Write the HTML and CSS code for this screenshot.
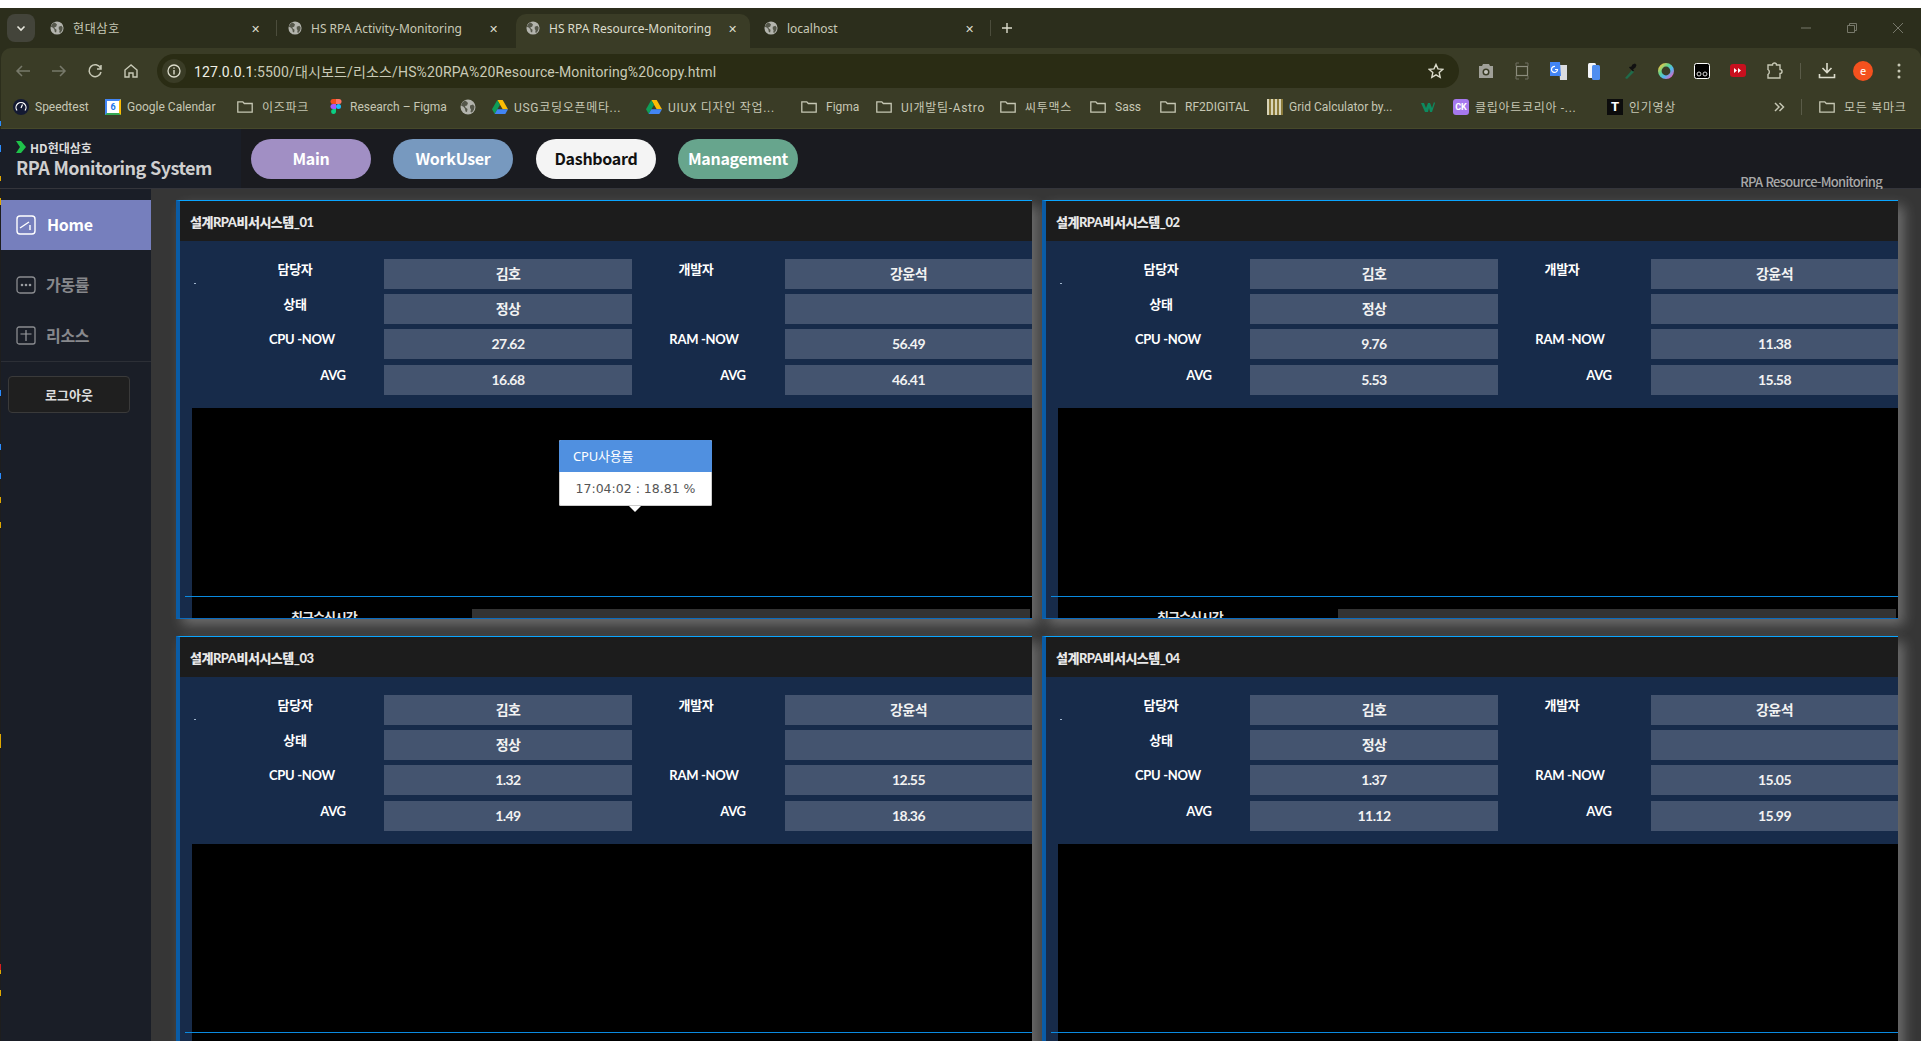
FILE: index.html
```html
<!DOCTYPE html>
<html lang="ko">
<head>
  <meta charset="UTF-8">
  <meta name="viewport" content="width=device-width, initial-scale=1.0">
  <title>HS RPA Resource-Monitoring</title>
  <link rel="stylesheet" href="styles.css">
</head>
<body>
  <!-- Shared browser icons -->
  <svg class="icon-defs" xmlns="http://www.w3.org/2000/svg">
    <symbol id="i-globe" viewBox="0 0 16 16">
      <circle cx="8" cy="8" r="7.5" fill="#b3b4ad"/>
      <path d="M5 1.6C3 2.6 1.5 4.500 1 6.500l2.500 1.300 1.500 2 .5 2.700 1.500.5.500-3-2-1.500-.5-1.500 2-.500 1-2.500L6.500 2.500zM10 6.500l3-1 1.500 2-.5 3-2 3-1.500-.5.5-2.500-1-1.500z" fill="#55574a"/>
    </symbol>
    <symbol id="i-folder" viewBox="0 0 16 16">
      <path d="M.8 2.800h5l1.500 1.700h7.900v8.700H.8z" fill="none" stroke="#c6c7b4" stroke-width="1.300"/>
    </symbol>
    <symbol id="i-drive" viewBox="0 0 16 14">
      <path d="M5.300 0h5.400L16 9.300h-5.300z" fill="#fbbc04"/>
      <path d="M5.300 0L0 9.300l2.700 4.700L8 4.700z" fill="#0f9d58"/>
      <path d="M5.400 9.300H16L13.300 14H2.700z" fill="#4285f4"/>
    </symbol>
  </svg>

  <!-- Coloured slivers of the window behind, along the left edge -->
  <div class="edge-marks"></div>

  <div class="tabstrip">
    <button class="tab-search">
      <svg width="12" height="12" viewBox="0 0 12 12"><path d="M2.500 4.500L6 8l3.500-3.500" fill="none" stroke="#e6e6dc" stroke-width="1.600"/></svg>
    </button>
    <div class="tab tab-sep">
      <svg class="tab-icon"><use href="#i-globe"/></svg>
      <span class="tab-label ko">현대삼호</span>
      <span class="tab-close">✕</span>
    </div>
    <div class="tab">
      <svg class="tab-icon"><use href="#i-globe"/></svg>
      <span class="tab-label">HS RPA Activity-Monitoring</span>
      <span class="tab-close">✕</span>
    </div>
    <div class="tab active">
      <svg class="tab-icon"><use href="#i-globe"/></svg>
      <span class="tab-label">HS RPA Resource-Monitoring</span>
      <span class="tab-close">✕</span>
    </div>
    <div class="tab tab-sep">
      <svg class="tab-icon"><use href="#i-globe"/></svg>
      <span class="tab-label">localhost</span>
      <span class="tab-close">✕</span>
    </div>
    <svg class="tab-new" width="12" height="12" viewBox="0 0 12 12"><path d="M6 1v10M1 6h10" stroke="#dcdccc" stroke-width="1.400"/></svg>
    <div class="window-btns">
      <svg width="46" height="12" viewBox="0 0 46 12"><path d="M18 6h10" stroke="#77786a"/></svg>
      <svg width="46" height="12" viewBox="0 0 46 12"><path d="M18.500 3.500h7v7h-7zM20.500 3.500v-2h7v7h-2" fill="none" stroke="#77786a"/></svg>
      <svg width="46" height="12" viewBox="0 0 46 12"><path d="M18 1l10 10M28 1L18 11" stroke="#77786a"/></svg>
    </div>
  </div>

  <div class="browser-panel">
    <div class="toolbar">
      <div class="nav-btns">
        <svg width="36" height="16" viewBox="0 0 36 16"><path d="M25 8H12M17 3l-5 5 5 5" fill="none" stroke="#77796a" stroke-width="1.500"/></svg>
        <svg width="36" height="16" viewBox="0 0 36 16"><path d="M11 8h13M19 3l5 5-5 5" fill="none" stroke="#77796a" stroke-width="1.500"/></svg>
        <svg width="36" height="16" viewBox="0 0 36 16"><path d="M23.500 5A6 6 0 1 0 24 9M24 2v4h-4" fill="none" stroke="#c8c9b6" stroke-width="1.500"/></svg>
        <svg width="36" height="16" viewBox="0 0 36 16"><path d="M18 2l-6 5v7h4v-4h4v4h4V7z" fill="none" stroke="#c8c9b6" stroke-width="1.400"/></svg>
      </div>
      <div class="omnibox">
        <span class="site-info">
          <svg width="14" height="14" viewBox="0 0 14 14"><circle cx="7" cy="7" r="6" fill="none" stroke="#dcdccc" stroke-width="1.300"/><path d="M7 6v4.500M7 3.500v1.300" stroke="#dcdccc" stroke-width="1.400"/></svg>
        </span>
        <span class="url"><span class="url-host">127.0.0.1</span>:5500/대시보드/리소스/HS%20RPA%20Resource-Monitoring%20copy.html</span>
        <svg class="star" width="16" height="16" viewBox="0 0 16 16"><path d="M8 1.500l2 4.400 4.700.5-3.500 3.200 1 4.700L8 11.900l-4.200 2.400 1-4.700L1.300 6.400 6 5.900z" fill="none" stroke="#dcdccc" stroke-width="1.400"/></svg>
      </div>
      <div class="actions">
        <svg width="36" height="18" viewBox="0 0 36 18"><path d="M11 4h3l1-2h6l1 2h3v12H11z" fill="#a0a098"/><circle cx="18" cy="10" r="3.500" fill="#3a3c26"/><circle cx="18" cy="10" r="2" fill="#c4c4bc"/></svg>
        <svg width="36" height="18" viewBox="0 0 36 18"><path d="M12 4V1h3M21 1h3v3M24 14v3h-3M15 17h-3v-3" fill="none" stroke="#6e6f60"/><rect x="12.500" y="4.500" width="11" height="9" fill="none" stroke="#8b8c7c" stroke-width="1.200"/></svg>
        <svg width="36" height="18" viewBox="0 0 36 18"><path d="M19 3h8v15h-7z" fill="#dadce0"/><path d="M10 0h10l1 14H10z" fill="#4285f4"/><path d="M15 4.500a3 3 0 1 0 2.500 3H15" fill="none" stroke="#fff" stroke-width="1.200"/></svg>
        <svg width="36" height="18" viewBox="0 0 36 18"><rect x="12" y="1" width="8" height="15" rx="1.500" fill="#f4f6fa"/><rect x="16" y="3" width="8" height="15" rx="1.500" fill="#4f8ef0"/></svg>
        <svg width="36" height="18" viewBox="0 0 36 18"><path d="M13 16l7-8 2 2-7 7z" fill="#1f6b4a"/><path d="M19 5l1.500-2.500 2.500-1 1.500 1.500-1 2.500L21 7.500l1 1-1 1-4-4 1-1z" fill="#111"/></svg>
        <svg width="36" height="18" viewBox="0 0 36 18"><circle cx="18" cy="9" r="6.200" fill="none" stroke="url(#ring)" stroke-width="3.600"/><defs><linearGradient id="ring" x1="0" y1="0" x2="1" y2="1"><stop offset="0" stop-color="#f5c542"/><stop offset=".35" stop-color="#5fd38d"/><stop offset=".65" stop-color="#4fb6f0"/><stop offset="1" stop-color="#e85fc0"/></linearGradient></defs></svg>
        <svg width="36" height="18" viewBox="0 0 36 18"><rect x="10.500" y="1.500" width="15" height="15" rx="2" fill="#000" stroke="#fff"/><circle cx="15" cy="12" r="2" fill="none" stroke="#ddd"/><circle cx="21" cy="12" r="2" fill="none" stroke="#ddd"/></svg>
        <svg width="36" height="18" viewBox="0 0 36 18"><rect x="10" y="2" width="16" height="13" rx="3" fill="#c8101e"/><path d="M14 6l3 2.500-3 2.500zM18 6l3 2.500-3 2.500z" fill="#fff"/></svg>
        <svg width="36" height="18" viewBox="0 0 36 18"><path d="M12 3h4.500a2 2 0 0 1 4 0H24v4.500a2 2 0 0 1 0 4V16H12v-3.500a3 3 0 0 0 0-5z" fill="none" stroke="#c6c7b4" stroke-width="1.400"/></svg>
        <span class="toolbar-sep"></span>
        <svg width="36" height="18" viewBox="0 0 36 18"><path d="M18 1v9M13.500 6l4.500 4.500L22.500 6M10.500 12v3.500h15V12" fill="none" stroke="#dcdccc" stroke-width="1.600"/></svg>
        <span class="avatar-wrap"><span class="avatar">e</span></span>
        <svg width="36" height="18" viewBox="0 0 36 18"><circle cx="18" cy="3" r="1.500" fill="#c8c9b6"/><circle cx="18" cy="9" r="1.500" fill="#c8c9b6"/><circle cx="18" cy="15" r="1.500" fill="#c8c9b6"/></svg>
      </div>
    </div>

    <div class="bookmarks">
      <span class="bm">
        <svg class="bm-icon" viewBox="0 0 16 16"><circle cx="8" cy="8" r="8" fill="#141a33"/><path d="M4 11.500A5 5 0 1 1 12 11.500M8 9l1.500-3.500" fill="none" stroke="#fff" stroke-width="1.200"/></svg>
        Speedtest
      </span>
      <span class="bm">
        <span class="gcal">6</span>
        Google Calendar
      </span>
      <span class="bm"><svg class="bm-icon bm-folder"><use href="#i-folder"/></svg><span class="ko">이즈파크</span></span>
      <span class="bm">
        <svg class="bm-icon" viewBox="0 0 16 16"><path d="M5 0h3v5H5a2.500 2.500 0 0 1 0-5z" fill="#f24e1e"/><path d="M8 0h3a2.500 2.500 0 0 1 0 5H8z" fill="#ff7262"/><path d="M5 5h3v5H5a2.500 2.500 0 0 1 0-5z" fill="#a259ff"/><circle cx="10.500" cy="7.500" r="2.500" fill="#1abcfe"/><path d="M5 10h3v3a2.500 2.500 0 1 1-3-3z" fill="#0acf83"/></svg>
        Research – Figma
      </span>
      <span class="bm"><svg class="bm-icon"><use href="#i-globe"/></svg></span>
      <span class="bm"><svg class="bm-icon"><use href="#i-drive"/></svg><span class="ko">USG코딩오픈메타...</span></span>
      <span class="bm"><svg class="bm-icon"><use href="#i-drive"/></svg><span class="ko">UIUX 디자인 작업...</span></span>
      <span class="bm"><svg class="bm-icon bm-folder"><use href="#i-folder"/></svg>Figma</span>
      <span class="bm"><svg class="bm-icon bm-folder"><use href="#i-folder"/></svg><span class="ko">UI개발팀-Astro</span></span>
      <span class="bm"><svg class="bm-icon bm-folder"><use href="#i-folder"/></svg><span class="ko">씨투맥스</span></span>
      <span class="bm"><svg class="bm-icon bm-folder"><use href="#i-folder"/></svg>Sass</span>
      <span class="bm"><svg class="bm-icon bm-folder"><use href="#i-folder"/></svg>RF2DIGITAL</span>
      <span class="bm"><span class="grid-calc"></span>Grid Calculator by...</span>
      <span class="bm">
        <svg class="bm-icon" viewBox="0 0 16 16"><path d="M0 4h3l2 5 2-5h2l2 5 2-6 1 1-3 9H9L8 9l-1 4H4z" fill="#0d8a5f"/></svg>
      </span>
      <span class="bm"><span class="ck">CK</span><span class="ko">클립아트코리아 -...</span></span>
      <span class="bm"><span class="tt">T</span><span class="ko">인기영상</span></span>
      <span class="bm-more">
        <svg width="12" height="12" viewBox="0 0 12 12"><path d="M2 2l4 4-4 4M6.500 2l4 4-4 4" fill="none" stroke="#c6c7b4" stroke-width="1.500"/></svg>
      </span>
      <span class="bm-sep"></span>
      <span class="bm bm-all"><svg class="bm-icon bm-folder"><use href="#i-folder"/></svg><span class="ko">모든 북마크</span></span>
    </div>
  </div>

  <header class="app-header">
    <div class="logo">
      <div class="logo-top">
        <svg width="10" height="12" viewBox="0 0 10 12"><path d="M0 0h5l5 6-5 6H0l4-6z" fill="#1fc24a"/></svg>
        HD현대삼호
      </div>
      <div class="logo-title">RPA Monitoring System</div>
    </div>
    <nav class="top-nav">
      <a class="pill pill-main">Main</a>
      <a class="pill pill-work">WorkUser</a>
      <a class="pill pill-dash">Dashboard</a>
      <a class="pill pill-mgmt">Management</a>
    </nav>
    <div class="page-name">RPA Resource-Monitoring</div>
  </header>

  <div class="app-body">
    <aside class="sidebar">
      <a class="side-home">
        <svg width="20" height="20" viewBox="0 0 20 20"><rect x="1" y="1" width="18" height="18" rx="3" fill="none" stroke="#fff" stroke-width="1.400"/><path d="M4 13l9-6M14 10v5" fill="none" stroke="#fff" stroke-width="1.400"/></svg>
        <span class="side-text">Home</span>
      </a>
      <div class="side-list">
        <a class="side-item">
          <svg width="20" height="18" viewBox="0 0 20 18"><rect x="1" y="1" width="18" height="16" rx="3" fill="none" stroke="#8a8c90" stroke-width="1.300"/><circle cx="6" cy="9" r="1.300" fill="#9a9ca0"/><circle cx="10" cy="9" r="1.300" fill="#9a9ca0"/><circle cx="14" cy="9" r="1.300" fill="#9a9ca0"/></svg>
          <span class="side-text">가동률</span>
        </a>
        <a class="side-item">
          <svg width="20" height="19" viewBox="0 0 20 19"><rect x="1" y="1" width="18" height="17" rx="2" fill="none" stroke="#8a8c90" stroke-width="1.300"/><path d="M4.500 8h11M10 4v11" fill="none" stroke="#9a9ca0" stroke-width="1.200"/></svg>
          <span class="side-text">리소스</span>
        </a>
      </div>
      <button class="logout">로그아웃</button>
    </aside>

    <main class="board">
      <section class="panel">
        <div class="panel-head">설계RPA비서시스템_01</div>
        <div class="panel-body">
          <div class="info">
            <div class="lb">담당자</div><div class="val">김호</div><div class="lb2">개발자</div><div class="val">강윤석</div>
            <div class="lb">상태</div><div class="val">정상</div><div class="lb2"></div><div class="val"></div>
            <div class="lb lb-now">CPU -NOW</div><div class="val">27.62</div><div class="lb2 lb2-now">RAM -NOW</div><div class="val">56.49</div>
            <div class="lb lb-avg">AVG</div><div class="val">16.68</div><div class="lb2 lb2-avg">AVG</div><div class="val">46.41</div>
          </div>
          <div class="chart">
            <div class="tooltip">
              <div class="tooltip-head">CPU사용률</div>
              <div class="tooltip-body">17:04:02 : 18.81 %</div>
            </div>
          </div>
          <div class="recv"><span class="recv-label">최근수신시간</span><span class="recv-bar"></span></div>
        </div>
      </section>

      <section class="panel">
        <div class="panel-head">설계RPA비서시스템_02</div>
        <div class="panel-body">
          <div class="info">
            <div class="lb">담당자</div><div class="val">김호</div><div class="lb2">개발자</div><div class="val">강윤석</div>
            <div class="lb">상태</div><div class="val">정상</div><div class="lb2"></div><div class="val"></div>
            <div class="lb lb-now">CPU -NOW</div><div class="val">9.76</div><div class="lb2 lb2-now">RAM -NOW</div><div class="val">11.38</div>
            <div class="lb lb-avg">AVG</div><div class="val">5.53</div><div class="lb2 lb2-avg">AVG</div><div class="val">15.58</div>
          </div>
          <div class="chart"></div>
          <div class="recv"><span class="recv-label">최근수신시간</span><span class="recv-bar"></span></div>
        </div>
      </section>

      <section class="panel">
        <div class="panel-head">설계RPA비서시스템_03</div>
        <div class="panel-body">
          <div class="info">
            <div class="lb">담당자</div><div class="val">김호</div><div class="lb2">개발자</div><div class="val">강윤석</div>
            <div class="lb">상태</div><div class="val">정상</div><div class="lb2"></div><div class="val"></div>
            <div class="lb lb-now">CPU -NOW</div><div class="val">1.32</div><div class="lb2 lb2-now">RAM -NOW</div><div class="val">12.55</div>
            <div class="lb lb-avg">AVG</div><div class="val">1.49</div><div class="lb2 lb2-avg">AVG</div><div class="val">18.36</div>
          </div>
          <div class="chart"></div>
          <div class="recv"><span class="recv-bar"></span></div>
        </div>
      </section>

      <section class="panel">
        <div class="panel-head">설계RPA비서시스템_04</div>
        <div class="panel-body">
          <div class="info">
            <div class="lb">담당자</div><div class="val">김호</div><div class="lb2">개발자</div><div class="val">강윤석</div>
            <div class="lb">상태</div><div class="val">정상</div><div class="lb2"></div><div class="val"></div>
            <div class="lb lb-now">CPU -NOW</div><div class="val">1.37</div><div class="lb2 lb2-now">RAM -NOW</div><div class="val">15.05</div>
            <div class="lb lb-avg">AVG</div><div class="val">11.12</div><div class="lb2 lb2-avg">AVG</div><div class="val">15.99</div>
          </div>
          <div class="chart"></div>
          <div class="recv"><span class="recv-bar"></span></div>
        </div>
      </section>
    </main>
  </div>
</body>
</html>
```

FILE: styles.css
```css
* {
  box-sizing: border-box;
}
html, body {
  height: 100%;
  margin: 0;
}
body {
  display: flex;
  flex-direction: column;
  padding-top: 8px;
  overflow: hidden;
  background: linear-gradient(#fff 8px, #2c2e1c 8px);
  font-family: "Noto Sans", "Noto Sans CJK KR", sans-serif;
}
.icon-defs {
  display: none;
}
svg {
  display: block;
  flex: none;
}
.ko {
  letter-spacing: 0.7px;
}
.edge-marks {
  position: absolute;
  left: 0;
  top: 0;
  z-index: 5;
  width: 1px;
  height: 1041px;
  background-image:
    linear-gradient(#2a8cff, #2a8cff),
    linear-gradient(#2a8cff, #2a8cff),
    linear-gradient(#e0a800, #e0a800),
    linear-gradient(#e0a800, #e0a800),
    linear-gradient(#2a8cff, #2a8cff),
    linear-gradient(#2a8cff, #2a8cff),
    linear-gradient(#2a8cff, #2a8cff),
    linear-gradient(#e0a800, #e0a800),
    linear-gradient(#e0a800, #e0a800),
    linear-gradient(#e0a800, #e0a800),
    linear-gradient(#d81e1e, #d81e1e),
    linear-gradient(#e0a800, #e0a800),
    linear-gradient(#e0a800, #e0a800);
  background-repeat: no-repeat;
  background-size: 1px 5px, 1px 7px, 1px 5px, 1px 7px, 1px 6px, 1px 6px, 1px 6px, 1px 6px, 1px 6px, 1px 14px, 1px 6px, 1px 4px, 1px 6px;
  background-position: 0 121px, 0 145px, 0 176px, 0 198px, 0 390px, 0 444px, 0 473px, 0 497px, 0 522px, 0 734px, 0 964px, 0 970px, 0 990px;
}

/* Browser tabs */
.tabstrip {
  display: flex;
  align-items: stretch;
  height: 40px;
  padding-top: 6px;
  background-color: #2c2e1c;
  font-size: 12px;
  color: #c8c9b6;
}
.tab-search {
  width: 28px;
  height: 28px;
  margin: 0 5px 0 7px;
  padding: 0;
  display: flex;
  align-items: center;
  justify-content: center;
  border: none;
  border-radius: 8px;
  background-color: #43443a;
}
.tab {
  position: relative;
  display: flex;
  align-items: center;
  width: 238px;
  padding: 0 0 6px 10px;
}
.tab.active {
  width: 234px;
  padding-left: 10px;
  margin-right: 4px;
  border-radius: 10px 10px 0 0;
  background-color: #3a3c26;
  color: #dcdccc;
}
.tab-sep:after {
  content: "";
  position: absolute;
  right: 1px;
  top: 6px;
  width: 1px;
  height: 16px;
  background-color: #4c4d3c;
}
.tab-icon {
  width: 14px;
  height: 14px;
  margin-right: 9px;
}
.tab-label {
  flex: 1;
  white-space: nowrap;
}
.tab-close {
  width: 12px;
  margin-right: 15px;
  font-size: 11px;
  color: #dcdccc;
}
.tab.active .tab-close {
  margin-right: 10px;
}
.tab-new {
  margin: 8px 0 0 9px;
}
.window-btns {
  display: flex;
  margin: 8px 0 0 auto;
}

/* Address bar */
.browser-panel {
  margin-left: 1px;
  border-radius: 10px 10px 0 0;
  background-color: #3a3c26;
}
.toolbar {
  display: flex;
  align-items: center;
  height: 40px;
  padding: 6px 4px 0 4px;
}
.nav-btns {
  display: flex;
  margin-right: 8px;
}
.omnibox {
  flex: 1;
  display: flex;
  align-items: center;
  height: 34px;
  padding: 0 15px 0 5px;
  border-radius: 17px;
  background-color: #2a2c14;
  font-family: "Roboto", "Noto Sans CJK KR", sans-serif;
  font-size: 14px;
  letter-spacing: 0.14px;
  color: #c9cab6;
}
.site-info {
  display: flex;
  align-items: center;
  justify-content: center;
  width: 24px;
  height: 24px;
  margin-right: 8px;
  border-radius: 50%;
  background-color: #3a3c26;
}
.url {
  flex: 1;
  white-space: nowrap;
}
.url-host {
  color: #f0f0e4;
}
.actions {
  display: flex;
  align-items: center;
  margin-left: 9px;
}
.toolbar-sep {
  width: 1px;
  height: 16px;
  margin: 0 8px;
  background-color: #5a5b48;
}
.avatar-wrap {
  display: flex;
  justify-content: center;
  width: 36px;
}
.avatar {
  width: 20px;
  height: 20px;
  border-radius: 50%;
  background-color: #f4511e;
  color: #fff;
  font-size: 11px;
  line-height: 19px;
  text-align: center;
}

/* Bookmarks bar */
.bookmarks {
  display: flex;
  align-items: center;
  height: 41px;
  padding: 0 14px 3px 12px;
  border-bottom: 1px solid #46482a;
  font-family: "Roboto", "Noto Sans CJK KR", sans-serif;
  font-size: 12px;
  color: #c6c7b4;
  white-space: nowrap;
}
.bm {
  flex: none;
  display: flex;
  align-items: center;
  gap: 6px;
}
.bm:nth-child(1) { width: 92px; }
.bm:nth-child(2) { width: 132px; }
.bm:nth-child(3) { width: 91px; }
.bm:nth-child(4) { width: 132px; }
.bm:nth-child(5) { width: 32px; }
.bm:nth-child(6) { width: 154px; }
.bm:nth-child(7) { width: 155px; }
.bm:nth-child(8) { width: 75px; }
.bm:nth-child(9) { width: 124px; }
.bm:nth-child(10) { width: 90px; }
.bm:nth-child(11) { width: 70px; }
.bm:nth-child(12) { width: 107px; }
.bm:nth-child(13) { width: 154px; }
.bm:nth-child(14) { width: 32px; }
.bm:nth-child(15) { width: 154px; }
.bm-icon {
  width: 16px;
  height: 16px;
}
.bm-folder {
  margin-right: 3px;
}
.gcal {
  width: 16px;
  height: 16px;
  border: 2px solid #4285f4;
  border-bottom-color: #34a853;
  border-right-color: #fbbc04;
  background-color: #fff;
  color: #1a73e8;
  font-size: 9px;
  font-weight: 700;
  line-height: 12px;
  text-align: center;
}
.grid-calc {
  width: 16px;
  height: 16px;
  background: repeating-linear-gradient(to right, #d8d4b8 0 2px, #8a7a3a 2px 4px);
}
.ck {
  width: 16px;
  height: 16px;
  border-radius: 3px;
  background-color: #a678ee;
  color: #fff;
  font-size: 9px;
  font-weight: 700;
  line-height: 16px;
  text-align: center;
}
.tt {
  width: 16px;
  height: 16px;
  background-color: #0c0c0c;
  color: #fff;
  font-size: 13px;
  font-weight: 800;
  line-height: 16px;
  text-align: center;
}
.bm-more {
  margin-left: auto;
  margin-right: 16px;
}
.bm-sep {
  width: 1px;
  height: 16px;
  margin-right: 17px;
  background-color: #5a5b48;
}
.bm-all {
  width: 88px;
}

/* App header */
.app-header {
  flex: none;
  display: flex;
  align-items: center;
  height: 60px;
  border-bottom: 1px solid #34353b;
  background-color: #1a1b20;
  font-family: "Noto Sans CJK KR", sans-serif;
}
.logo {
  flex: none;
  width: 241px;
  height: 100%;
  padding: 10px 0 0 16px;
  background-color: #1a1e27;
}
.logo-top {
  display: flex;
  align-items: center;
  gap: 4px;
  height: 16px;
  font-size: 12px;
  font-weight: 700;
  color: #dddddd;
}
.logo-title {
  margin-top: -1px;
  font-size: 18px;
  font-weight: 700;
  line-height: 26px;
  letter-spacing: -0.57px;
  color: #cfcfcf;
  white-space: nowrap;
}
.top-nav {
  display: flex;
  gap: 22px;
  margin-left: 10px;
}
.pill {
  width: 120px;
  height: 40px;
  border-radius: 20px;
  font-size: 16px;
  font-weight: 700;
  line-height: 38px;
  text-align: center;
  letter-spacing: -0.3px;
  color: #fff;
}
.pill-main {
  background-color: #a18fc4;
}
.pill-work {
  background-color: #7799bf;
}
.pill-dash {
  margin-left: 1px;
  background-color: #f4f4f4;
  color: #111;
}
.pill-mgmt {
  background-color: #67a58d;
}
.page-name {
  align-self: flex-end;
  margin: 0 39px 0 auto;
  font-size: 13px;
  font-weight: 500;
  line-height: 12px;
  letter-spacing: -0.7px;
  color: #a8a8a8;
}

/* Sidebar */
.app-body {
  flex: 1;
  min-height: 0;
  display: flex;
}
.sidebar {
  flex: none;
  width: 151px;
  padding-top: 11px;
  border-left: 1px solid #1e1e1e;
  background-color: #1a1e27;
  font-family: "Noto Sans CJK KR", sans-serif;
}
.side-text {
  margin-top: -2px;
}
.side-home {
  display: flex;
  align-items: center;
  gap: 11px;
  height: 50px;
  padding-left: 15px;
  background-color: #767fbd;
  font-size: 16px;
  font-weight: 700;
  letter-spacing: -0.3px;
  color: #fff;
}
.side-list {
  margin-top: 10px;
  margin-bottom: -1px;
  border-bottom: 1px solid #2c2f36;
}
.side-item {
  display: flex;
  align-items: center;
  gap: 10px;
  height: 50.5px;
  padding-left: 15px;
  font-size: 16px;
  font-weight: 700;
  letter-spacing: -0.3px;
  color: #87888c;
}
.logout {
  display: block;
  width: 122px;
  height: 37px;
  margin: 15px 0 0 7px;
  border: 1px solid #3a3a3a;
  border-radius: 4px;
  background-color: #1f1f1f;
  font-family: inherit;
  font-size: 13px;
  font-weight: 700;
  color: #dddddd;
}

/* Monitoring panels */
.board {
  flex: 1;
  min-width: 0;
  display: grid;
  grid-template-columns: 856px 856px;
  grid-auto-rows: 419px;
  gap: 17px 10px;
  padding: 11px 0 0 25px;
  overflow: hidden;
  background-color: #363636;
  font-family: "Lato", "Noto Sans CJK KR", sans-serif;
}
.panel {
  display: flex;
  flex-direction: column;
  overflow: hidden;
  border-top: 1px solid #0aa5ff;
  border-left: 4px solid #0a5ca6;
  border-bottom: 1px solid #0a6cc0;
  box-shadow: 6px 6px 12px rgba(255, 255, 255, 0.28);
}
.panel-head {
  flex: none;
  height: 40px;
  padding-left: 10px;
  background-color: #1c1c1c;
  font-size: 13px;
  font-weight: 900;
  line-height: 43px;
  letter-spacing: -0.5px;
  color: #e8e8e8;
}
.panel-body {
  flex: 1;
  min-height: 0;
  background-color: #172b4a;
}
.info {
  position: relative;
  display: grid;
  grid-template-columns: 204px 248px 153px 247px;
  grid-auto-rows: 30px;
  row-gap: 5px;
  padding-top: 18px;
  font-size: 13px;
  font-weight: 700;
  color: #fff;
}
/* tiny stray dash left of the labels */
.info:before {
  content: "";
  position: absolute;
  left: 14px;
  top: 42px;
  width: 2px;
  height: 1px;
  background-color: #9fb4cc;
}
.lb, .lb2 {
  line-height: 20px;
  text-align: center;
  letter-spacing: -0.3px;
  white-space: nowrap;
}
.lb {
  padding-left: 26px;
}
.lb-now {
  padding-left: 40px;
}
.lb-avg {
  padding-left: 102px;
}
.lb2 {
  padding-right: 25px;
}
.lb2-now {
  padding-right: 9px;
}
.lb2-avg {
  padding-right: 0;
  padding-left: 49px;
}
.val {
  background-color: #44546f;
  font-size: 14px;
  line-height: 30px;
  text-align: center;
  letter-spacing: -0.6px;
  color: #f2f2f2;
}
.lb-avg, .lb-avg + .val, .lb2-avg, .lb2-avg + .val {
  position: relative;
  top: 1px;
}
.chart {
  position: relative;
  height: 188px;
  margin: 14px 0 0 12px;
  background-color: #000;
}
.tooltip {
  position: absolute;
  left: 367px;
  top: 32px;
  width: 153px;
  height: 66px;
  border-radius: 2px;
  background-color: #fff;
  box-shadow: 0 0 0 1px #ccc inset;
}
.tooltip:after {
  content: "";
  position: absolute;
  left: 70px;
  top: 100%;
  border: 6px solid transparent;
  border-top-color: #fff;
  border-bottom: none;
}
.tooltip-head {
  height: 32px;
  padding-left: 14px;
  border-radius: 2px 2px 0 0;
  background-color: #5090e0;
  font-family: "Noto Sans", "Noto Sans CJK KR", sans-serif;
  font-size: 13px;
  line-height: 33px;
  letter-spacing: -0.2px;
  color: #fff;
}
.tooltip-body {
  font-family: "DejaVu Sans", sans-serif;
  font-size: 12.5px;
  line-height: 33px;
  text-align: center;
  color: #555;
}
.recv {
  display: flex;
  align-items: flex-start;
  height: 22px;
  margin-left: 5px;
  padding-top: 12px;
  border-top: 1px solid #0a8ae0;
  background: linear-gradient(to right, #172b4a 7px, #000 7px);
  overflow: hidden;
}
.recv-label {
  width: 181px;
  margin: -1px 0 0 106px;
  font-size: 13px;
  font-weight: 700;
  line-height: 18px;
  letter-spacing: -1px;
  color: #e8e8e8;
}
.recv-bar {
  width: 558px;
  height: 30px;
  margin-left: auto;
  margin-right: 2px;
  background-color: #333;
}
```
